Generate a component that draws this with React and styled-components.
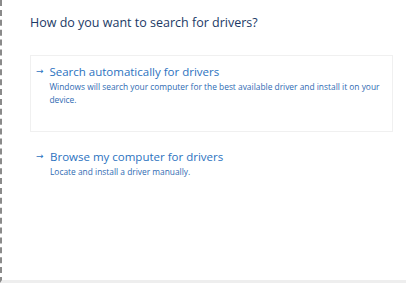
import React from 'react'
import styled, { createGlobalStyle } from 'styled-components'

const GlobalStyle = createGlobalStyle`
    html, body {
        margin: 0;
        padding: 0;
        background: #ffffff;
    }
    body {
        font-family: "Open Sans", "Noto Sans", sans-serif;
    }
`

const options = [
    {
        title: 'Search automatically for drivers',
        text: 'Windows will search your computer for the best available driver and install it on your device.',
        boxed: true,
    },
    {
        title: 'Browse my computer for drivers',
        text: 'Locate and install a driver manually.',
        boxed: false,
    },
]

function App() {
    return (
        <>
            <GlobalStyle />
            <Frame>
                <Heading>How do you want to search for drivers?</Heading>
                <List>
                    {options.map((o) => (
                        <Option key={o.title} $boxed={o.boxed}>
                            <Arrow>→</Arrow>
                            <Body>
                                <Title>{o.title}</Title>
                                <Text>{o.text}</Text>
                            </Body>
                        </Option>
                    ))}
                </List>
            </Frame>
        </>
    )
}

const Frame = styled.div`
    box-sizing: border-box;
    width: 406px;
    height: 283px;
    border-left: 2px dashed #8a8a8a;
    border-bottom: 3px solid #eeeeee;
    padding: 14px 13px 0 28px;
    display: flex;
    flex-direction: column;
`

const Heading = styled.h1`
    margin: 0;
    font-size: 12.5px;
    font-weight: 400;
    color: #1b3a66;
    line-height: 18px;
`

const List = styled.div`
    margin-top: 23px;
    display: flex;
    flex-direction: column;
    gap: 8px;
`

const Option = styled.div`
    display: flex;
    gap: 4px;
    padding: 7px 6px 0 5px;
    height: ${(p) => (p.$boxed ? '68px' : 'auto')};
    border: 1px solid ${(p) => (p.$boxed ? '#f0f0f0' : 'transparent')};
`

const Arrow = styled.span`
    width: 10px;
    font-family: "DejaVu Sans", sans-serif;
    font-size: 9px;
    line-height: 17px;
    color: #2b72c0;
`

const Body = styled.div`
    display: flex;
    flex-direction: column;
`

const Title = styled.div`
    font-size: 11.5px;
    line-height: 17px;
    color: #2b72c0;
`

const Text = styled.div`
    font-size: 8.4px;
    line-height: 13px;
    color: #2f6bb3;
`

export default App
